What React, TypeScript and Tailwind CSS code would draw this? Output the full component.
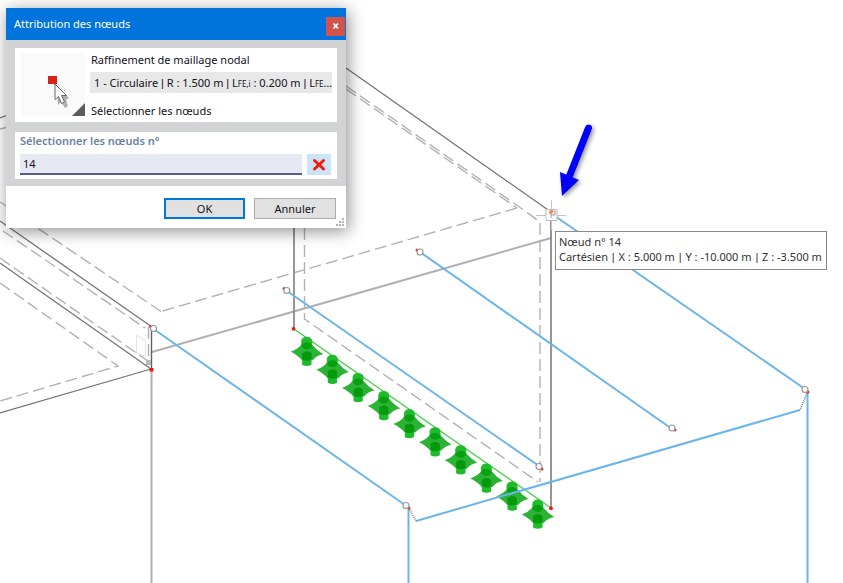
import React, { useState } from 'react';

interface Point {
  x: number;
  y: number;
}

const supports: Point[] = Array.from({ length: 10 }, (_, i) => ({
  x: 306.7 + i * 25.67,
  y: 352.2 + i * 18.1,
}));

const solidEdges = [
  'M346 68 L551 212',
  'M0 221 L152 327',
  'M0 263 L151 369',
  'M151 369 L0 413',
  'M0 118 L8 115',
];

const dashedEdges = [
  'M346 86 L518 206 L540 222 V482',
  'M346 89 L517 208',
  'M517 208 L161 311.5',
  'M161 311.5 L36 227',
  'M3 231 L145 328',
  'M0 258 L148 361',
  'M0 283 L118 366 L0 401',
  'M304.5 228 V319 L538 482',
  'M0 129 L8 127',
  'M0 202 L8 207',
  'M148.5 327 V360',
];

const members = [
  'M155 330 L405 505',
  'M287 291 L539 466',
  'M420 252 L672 429',
  'M552 214 L805 389',
  'M807.5 392 V583',
  'M408.5 507 V583',
  'M416 521 L800 410',
];

const nodes: (Point & { rx: number; ry: number })[] = [
  { x: 153.5, y: 328.5, rx: 150.5, ry: 326.5 },
  { x: 286.8, y: 290.5, rx: 284, ry: 288.5 },
  { x: 420, y: 252, rx: 417, ry: 250 },
  { x: 672, y: 428, rx: 675, ry: 430 },
  { x: 539, y: 466.5, rx: 542, ry: 469 },
  { x: 805, y: 389.5, rx: 808, ry: 392 },
  { x: 406, y: 505.5, rx: 409, ry: 508 },
];

const ModelView: React.FC = () => (
  <svg
    viewBox="0 0 843 583"
    preserveAspectRatio="xMinYMin slice"
    className="absolute inset-0 w-full h-full"
    fill="none"
    aria-hidden="true"
  >
    <g stroke="#b0b0b0" strokeWidth="2">
      <path d="M152 352 L551 238" />
      <path d="M151.5 369 V583" />
    </g>
    {dashedEdges.map(d => (
      <path key={d} d={d} stroke="#b2b2b2" strokeWidth="1.4" strokeDasharray="12 5" />
    ))}
    {solidEdges.map(d => (
      <path key={d} d={d} stroke="#747474" strokeWidth="1.3" />
    ))}
    <path d="M294 228 V329" stroke="#8c8c8c" strokeWidth="1.8" />
    <path d="M551 218 V508" stroke="#7c7c7c" strokeWidth="1.6" />
    <path d="M151.5 328 V369" stroke="#606060" strokeWidth="1.4" />
    <path d="M136.5 335.5 l9 5 v16 l-9 -4 z" stroke="#c8c8c8" strokeDasharray="1 1" />
    <path d="M146 360 h5 v5 h-5 z" fill="#b8b8b8" />

    <path d="M294 329 L551 508" stroke="#3fce45" strokeWidth="1.3" />
    {supports.map(({ x, y }) => (
      <g key={x} transform={`translate(${x} ${y})`}>
        <path d="M-5.5 -11 a5.5 4.5 0 0 1 11 0 V-4 H-5.5 Z" fill="#20bb2c" />
        <path d="M-4.6 3 H4.8 V12.5 q-4.7 2.5 -9.4 0 Z" fill="#20bb2c" />
        <path d="M-16 -0.5 Q-9 -3 -5 -8 L5.5 -7.5 Q10 -2 16.500 2 Q10 3 6 8 L-4.500 8 Q-10 2 -16 -0.500 Z" fill="#2cb335" />
        <ellipse cx="0" cy="-6.5" rx="5" ry="3.5" fill="#06a010" />
        <path d="M-4.6 1 q4.7 -4 9.4 0 V7 q-4.7 3 -9.4 0 Z" fill="#049a0c" />
      </g>
    ))}

    {members.map(d => (
      <path key={d} d={d} stroke="#6bb5ea" strokeWidth="2" />
    ))}
    <path d="M807 393 L800 410 M409 508 L416 521" stroke="#777" strokeWidth="1.5" strokeDasharray="1 1" />

    <g fill="#f0160e">
      <circle cx="293.5" cy="328.8" r="1.9" />
      <circle cx="551" cy="508.3" r="1.9" />
      <path d="M149.5 368 h4 v3.5 h-4 z" />
    </g>
    {nodes.map(n => (
      <g key={n.x}>
        <circle cx={n.rx} cy={n.ry} r="1.5" fill="#e8301f" />
        <circle cx={n.x} cy={n.y} r="3" fill="#fff" stroke="#969696" strokeWidth="1.1" />
      </g>
    ))}

    {/* snap marker on the picked node */}
    <path d="M536 215.5 h30 M551.5 200 v30" stroke="#c4c4c4" />
    <path d="M546 209.5 h11 v11 h-11 z" fill="#fff" stroke="#bdbdbd" />
    <path d="M551 218 v-7 h4 v4 h-4" stroke="#999" />
    <circle cx="551" cy="212" r="2" fill="#f58a4e" />

    <g className="drop-shadow-[2px_2px_2px_rgba(0,0,0,0.4)]">
      <path d="M588.5 128 L569.5 176" stroke="#0000ff" strokeWidth="7" strokeLinecap="round" />
      <path d="M560 172 L579 180 L562 196 Z" fill="#0000ff" />
    </g>
  </svg>
);

const NodePickIcon: React.FC = () => (
  <svg viewBox="0 0 64 64" className="w-16 h-16 mt-px shrink-0" aria-hidden="true">
    <rect width="64" height="64" fill="#fafafa" />
    <path d="M36 33 l12 12 -3 2 2 6 -3 2 -4 -6 -3 3 z" fill="#777" opacity="0.55" />
    <path d="M27 23 h9 v8 h-9 z" fill="#d9201b" />
    <path d="M34 31 V46.5 L37.5 43.5 L40.5 50.5 L43.5 49 L40.5 42.5 H45.5 Z" fill="#fff" stroke="#666" />
    <path d="M64 50 V63 H51 Z" fill="#5c5c5c" />
  </svg>
);

const Bar: React.FC<{ className?: string }> = ({ className = '' }) => (
  <span className={`font-['Liberation_Sans',sans-serif] ${className}`}>|</span>
);

const AssignDialog: React.FC = () => {
  const [nodeList, setNodeList] = useState('14');

  return (
    <section
      role="dialog"
      aria-labelledby="dialog-title"
      className="absolute left-1.5 top-2 w-[340px] bg-white shadow-[2px_3px_16px_rgba(0,0,0,0.45)]"
    >
      <header className="flex items-center justify-between h-8 pl-2 bg-[#0074dc] text-white">
        <h1 id="dialog-title" className="text-[11px]">Attribution des nœuds</h1>
        <button aria-label="Fermer" className="flex items-center justify-center w-[19px] h-[19px] mt-1 mr-px bg-[#d2524c]">
          <svg viewBox="0 0 8 8" className="w-2 h-2" stroke="#fff" strokeWidth="1.8">
            <path d="M1.5 1.5 L6 6.5 M6 1.5 L1.5 6.5" />
          </svg>
        </button>
      </header>

      <div className="flex flex-col gap-2.5 px-[9px] pt-2 pb-[7px] bg-[#d2d3d5]">
        <div className="flex gap-[5px] pl-1.5 pr-[5px] pt-1 pb-[3px] bg-white">
          <NodePickIcon />
          <div className="flex-1 min-w-0 text-[11px] leading-4">
            <p className="pl-px">Raffinement de maillage nodal</p>
            <p className="h-[21px] mt-1 mb-2.5 pl-1 bg-[#e8e8e8] leading-[22px] whitespace-nowrap">
              1 - Circulaire <Bar /> R : 1.500 m <Bar /> L<span className="text-[8px]">FE,i</span> : 0.200 m <Bar /> L
              <span className="text-[8px]">FE</span>…
            </p>
            <p className="pl-px">Sélectionner les nœuds</p>
          </div>
        </div>

        <div className="pl-[5px] pr-1.5 pb-1 bg-white">
          <label htmlFor="node-list" className="block h-[22px] text-[11px] leading-[18px] font-semibold text-[#6a7fa3]">
            Sélectionner les nœuds n°
          </label>
          <div className="flex gap-[5px]">
            <input
              id="node-list"
              type="text"
              value={nodeList}
              onChange={e => setNodeList(e.target.value)}
              className="flex-1 min-w-0 h-[21px] px-[3px] text-[11px] bg-[#e6e8f2] border-b-2 border-[#5a5a96] outline-none"
            />
            <button
              aria-label="Effacer"
              onClick={() => setNodeList('')}
              className="flex items-center justify-center w-6 h-[21px] bg-[#cce4f7]"
            >
              <svg viewBox="0 0 14 14" className="w-3.5 h-3.5" stroke="#f51b06" strokeWidth="3" strokeLinecap="round">
                <path d="M2.5 2.5 L11.5 11 M11.5 2.5 L2.5 11" />
              </svg>
            </button>
          </div>
        </div>
      </div>

      <footer className="relative flex justify-end gap-[9px] h-[42px] pt-3 pr-2.5 text-[11px]">
        <button className="w-[81px] h-[21px] bg-[#e1e1e1] border-2 border-[#0078d7] leading-4">OK</button>
        <button className="w-[82px] h-[21px] bg-[#e1e1e1] border border-[#adadad] leading-4">Annuler</button>
        <svg viewBox="0 0 9 9" className="absolute right-0.5 bottom-0.5 w-[9px] h-[9px]" fill="#b4b4b4" aria-hidden="true">
          <path d="M7 1 h2 v2 h-2 z M4 4 h2 v2 h-2 z M7 4 h2 v2 h-2 z M1 7 h2 v2 h-2 z M4 7 h2 v2 h-2 z M7 7 h2 v2 h-2 z" />
        </svg>
      </footer>
    </section>
  );
};

export default function App() {
  return (
    <main className="relative min-h-screen overflow-hidden bg-white font-['Noto_Sans','Open_Sans',sans-serif] text-[#11111c]">
      <ModelView />
      <AssignDialog />
      <div
        role="tooltip"
        className="absolute left-[555px] top-[231px] pl-[3px] pr-1 pt-0.5 pb-1 bg-white border border-[#8a8a8a] text-[11px] leading-[15px] text-[#333] whitespace-nowrap"
      >
        <p>Nœud n° 14</p>
        <p>
          Cartésien <Bar className="px-px" /> X : 5.000 m <Bar className="px-px" /> Y : -10.000 m{' '}
          <Bar className="px-px" /> Z : -3.500 m
        </p>
      </div>
    </main>
  );
}
